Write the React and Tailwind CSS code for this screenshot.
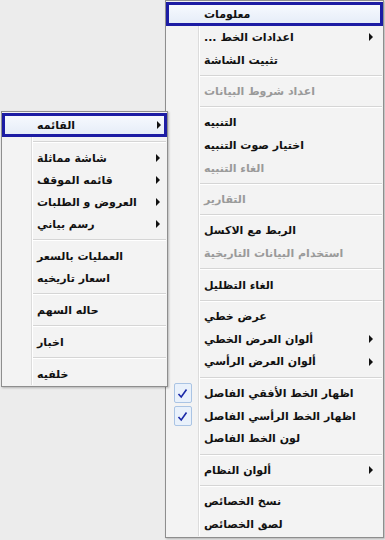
import React from "react";

const mainItems = [
  { t: "معلومات", hl: true },
  { t: "اعدادات الخط", dots: true, arrow: true },
  { t: "تثبيت الشاشة" },
  { sep: true },
  { t: "اعداد شروط البيانات", dis: true },
  { sep: true },
  { t: "التنبيه" },
  { t: "اختيار صوت التنبيه" },
  { t: "الغاء التنبيه", dis: true },
  { sep: true },
  { t: "التقارير", dis: true },
  { sep: true },
  { t: "الربط مع الاكسل" },
  { t: "استخدام البيانات التاريخية", dis: true },
  { sep: true },
  { t: "الغاء التظليل" },
  { sep: true },
  { t: "عرض خطي" },
  { t: "ألوان العرض الخطي", arrow: true },
  { t: "ألوان العرض الرأسي", arrow: true },
  { sep: true },
  { t: "اظهار الخط الأفقي الفاصل", check: true },
  { t: "اظهار الخط الرأسي الفاصل", check: true },
  { t: "لون الخط الفاصل" },
  { sep: true },
  { t: "ألوان النظام", arrow: true },
  { sep: true },
  { t: "نسخ الخصائص" },
  { t: "لصق الخصائص" },
];

const subItems = [
  { t: "القائمه", hl: true, arrow: true },
  { sep: true },
  { t: "شاشة مماثلة", arrow: true },
  { t: "قائمه الموقف", arrow: true },
  { t: "العروض و الطلبات", arrow: true },
  { t: "رسم بياني", arrow: true },
  { sep: true },
  { t: "العمليات بالسعر" },
  { t: "اسعار تاريخيه" },
  { sep: true },
  { t: "حاله السهم" },
  { sep: true },
  { t: "اخبار" },
  { sep: true },
  { t: "خلفيه" },
];

function Arrow() {
  return (
    <div className="w-0 h-0 border-y-[4px] border-y-transparent border-l-[4px] border-l-[#111]" />
  );
}

function Check() {
  return (
    <div className="w-[18px] h-[20px] rounded-[2px] border border-[#aac4e4] bg-[#e9f1fb] flex items-center justify-center">
      <svg width="11" height="11" viewBox="0 0 11 11">
        <path d="M1.5 6 L4.2 9 L9.5 1.5" fill="none" stroke="#1b2aa8" strokeWidth="1.6" />
      </svg>
    </div>
  );
}

function Menu({ items, gutter, rowH, hlH, sepH, arrowRight, className }) {
  return (
    <div
      className={
        "border border-[#8e8e8e] bg-[#f3f3f3] p-[1px] shadow-[1px_1px_2px_rgba(0,0,0,0.25)] " +
        className
      }
      style={{ fontFamily: '"DejaVu Sans", sans-serif' }}
    >
      <div className="relative">
        <div
          className="absolute top-0 bottom-0 border-l border-l-[#dcdcdc] border-r border-r-white"
          style={{ left: gutter }}
        />
        {items.map((it, i) =>
          it.sep ? (
            <div key={i} className="flex items-center" style={{ height: sepH, paddingLeft: gutter + 2 }}>
              <div className="flex-1 border-t border-t-[#d5d5d5] border-b border-b-white" />
            </div>
          ) : (
            <div
              key={i}
              className={
                "relative flex items-center " +
                (it.hl
                  ? "border-[3px] border-[#1c1ca4] bg-gradient-to-b from-[#f6f9fe] to-[#e6edf8] -mx-[1px]"
                  : "")
              }
              style={{ height: it.hl ? hlH : rowH }}
            >
              <div
                className="flex items-center justify-center shrink-0"
                style={{ width: gutter - (it.hl ? 2 : 0) }}
              >
                {it.check && <Check />}
              </div>
              <span
                dir="ltr"
                className={
                  "ml-[6px] text-[11px] font-bold leading-none whitespace-nowrap " +
                  (it.dis ? "text-[#9a9a9a]" : "text-[#111]")
                }
              >
                {it.dots ? "... " : ""}
                <span dir="rtl">{it.t}</span>
              </span>
              <div className="flex-1" />
              {it.arrow && (
                <div style={{ marginRight: arrowRight - (it.hl ? 3 : 0) }}>
                  <Arrow />
                </div>
              )}
            </div>
          )
        )}
      </div>
    </div>
  );
}

export default function App() {
  return (
    <div className="relative w-[385px] h-[540px] bg-[#ececec] overflow-hidden">
      <Menu
        items={mainItems}
        gutter={31}
        rowH={22.8}
        hlH={24}
        sepH={8.5}
        arrowRight={9}
        className="ml-[165px] w-[219px]"
      />
      <Menu
        items={subItems}
        gutter={28}
        rowH={22}
        hlH={24}
        sepH={10}
        arrowRight={6}
        className="absolute left-[1px] top-[111px] w-[167px]"
      />
    </div>
  );
}
